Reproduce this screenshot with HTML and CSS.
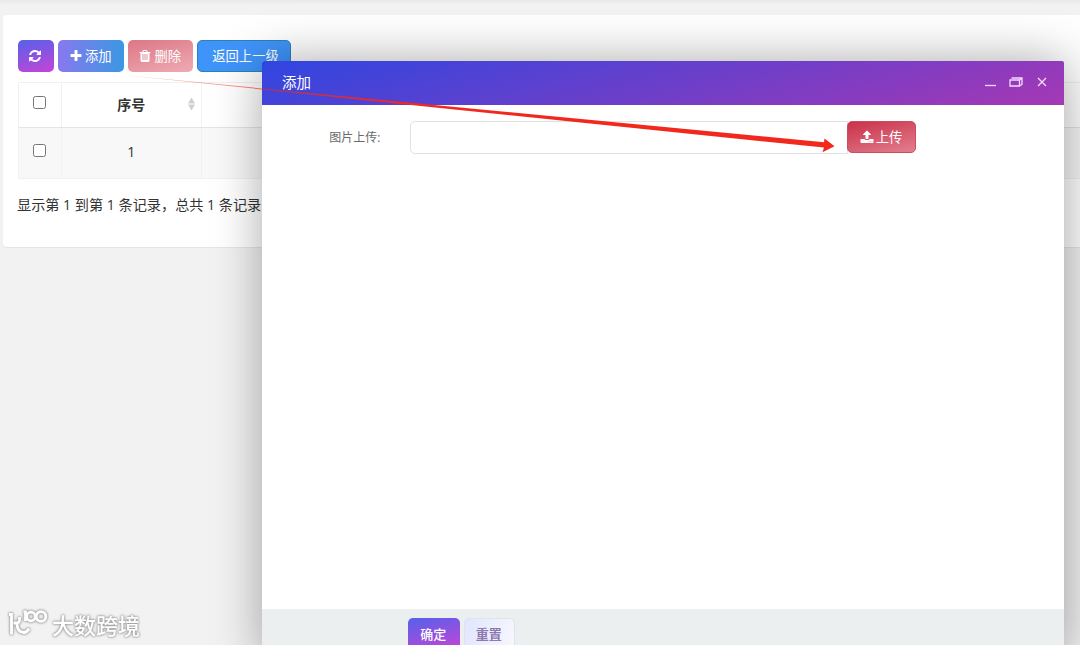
FILE: index.html
```html
<!DOCTYPE html>
<html lang="zh-CN">
<head>
    <meta charset="UTF-8">
    <title>添加</title>
    <link rel="stylesheet" href="styles.css">
</head>
<body>
<div class="card">
    <div class="toolbar">
        <button class="btn btn--refresh">
            <svg class="icon" viewBox="0 0 1792 1792"><path d="M1639 1056q0 5-1 7-64 268-268 434.5t-478 166.5q-146 0-282.5-55t-243.5-157l-129 129q-19 19-45 19t-45-19-19-45v-448q0-26 19-45t45-19h448q26 0 45 19t19 45-19 45l-137 137q71 66 161 102t187 36q134 0 250-65t186-179q11-17 53-117 8-23 30-23h192q13 0 22.5 9.5t9.5 22.5zm25-800v448q0 26-19 45t-45 19h-448q-26 0-45-19t-19-45 19-45l138-138q-148-137-349-137-134 0-250 65t-186 179q-11 17-53 117-8 23-30 23h-199q-13 0-22.5-9.5t-9.5-22.5v-7q65-268 270-434.5t480-166.5q146 0 284 55.5t245 156.5l130-129q19-19 45-19t45 19 19 45z"/></svg>
        </button>
        <button class="btn btn--add">
            <svg class="icon" viewBox="0 0 1792 1792"><path d="M1600 736v192q0 40-28 68t-68 28h-416v416q0 40-28 68t-68 28h-192q-40 0-68-28t-28-68v-416h-416q-40 0-68-28t-28-68v-192q0-40 28-68t68-28h416v-416q0-40 28-68t68-28h192q40 0 68 28t28 68v416h416q40 0 68 28t28 68z"/></svg>
            <span>添加</span>
        </button>
        <button class="btn btn--delete">
            <svg class="icon" viewBox="0 0 1792 1792"><path d="M704 1376v-704q0-14-9-23t-23-9h-64q-14 0-23 9t-9 23v704q0 14 9 23t23 9h64q14 0 23-9t9-23zm256 0v-704q0-14-9-23t-23-9h-64q-14 0-23 9t-9 23v704q0 14 9 23t23 9h64q14 0 23-9t9-23zm256 0v-704q0-14-9-23t-23-9h-64q-14 0-23 9t-9 23v704q0 14 9 23t23 9h64q14 0 23-9t9-23zm-544-992h448l-48-117q-7-9-17-11h-317q-10 2-17 11zm928 32v64q0 14-9 23t-23 9h-96v948q0 83-47 143.5t-113 60.5h-832q-66 0-113-58.5t-47-141.5v-952h-96q-14 0-23-9t-9-23v-64q0-14 9-23t23-9h309l70-167q15-37 54-63t79-26h320q40 0 79 26t54 63l70 167h309q14 0 23 9t9 23z"/></svg>
            <span>删除</span>
        </button>
        <button class="btn btn--back">返回上一级</button>
    </div>
    <div class="table">
        <div class="table__row table__row--head">
            <div class="table__cell"><input class="checkbox" type="checkbox"></div>
            <div class="table__cell">
                序号
                <svg class="table__sort" viewBox="0 0 8 15"><path d="M4 0l4 7H0zM4 15l4-7H0z"/></svg>
            </div>
            <div class="table__cell"></div>
        </div>
        <div class="table__row table__row--body">
            <div class="table__cell"><input class="checkbox" type="checkbox"></div>
            <div class="table__cell">1</div>
            <div class="table__cell"></div>
        </div>
    </div>
    <div class="summary">显示第 1 到第 1 条记录，总共 1 条记录</div>
</div>

<div class="layer">
    <div class="layer__title">
        <span>添加</span>
        <div class="layer__controls">
            <svg viewBox="0 0 12 12"><path d="M1 9.5h11"/></svg>
            <svg class="layer__max" viewBox="0 0 14 12"><path d="M1 4h9.5v6H1zM2.5 2h10.5v6.5l-2.5 1.5M10.5 4l2.5-2"/></svg>
            <svg viewBox="0 0 12 12"><path d="M2 2l8 8M10 2l-8 8"/></svg>
        </div>
    </div>
    <div class="layer__content">
        <label class="field__label" for="picture">图片上传:</label>
        <input class="field__input" id="picture" type="text">
        <button class="btn btn--upload">
            <svg class="icon" viewBox="0 0 1792 1792"><path d="M1344 1472q0-26-19-45t-45-19-45 19-19 45 19 45 45 19 45-19 19-45zm256 0q0-26-19-45t-45-19-45 19-19 45 19 45 45 19 45-19 19-45zm128-224v320q0 40-28 68t-68 28h-1472q-40 0-68-28t-28-68v-320q0-40 28-68t68-28h427q21 56 70.5 92t110.5 36h256q61 0 110.5-36t70.5-92h427q40 0 68 28t28 68zm-325-648q-17 40-59 40h-256v448q0 26-19 45t-45 19h-256q-26 0-45-19t-19-45v-448h-256q-42 0-59-40-17-39 14-69l448-448q18-19 45-19t45 19l448 448q31 30 14 69z"/></svg>
            <span>上传</span>
        </button>
    </div>
    <div class="layer__footer">
        <button class="btn btn--ok">确定</button>
        <button class="btn btn--reset">重置</button>
    </div>
</div>

<svg class="arrow" viewBox="0 0 1080 645">
    <defs>
        <linearGradient id="fade" gradientUnits="userSpaceOnUse" x1="118" y1="0" x2="400" y2="0">
            <stop offset="0" stop-color="#f2281c" stop-opacity=".3"/>
            <stop offset="1" stop-color="#f2281c"/>
        </linearGradient>
    </defs>
    <path fill="url(#fade)" d="M118 74.6L824 142.3L824.5 138.5L834.5 146.3L822.5 152.2L824 147.6Z"/>
</svg>

<div class="watermark">
    <svg class="watermark__logo" viewBox="0 0 40 30">
        <path d="M1 5.5h2.5v20M11.5 8v3q0 3-3 3h-3M9 14.5q0 9 7 9 3 0 5-4M15.5 3h2v9"/>
        <circle cx="23" cy="7.5" r="4.3"/>
        <circle cx="33" cy="7.5" r="4.8"/>
    </svg>
    <span>大数跨境</span>
</div>
</body>
</html>
```
FILE: styles.css
```css
html,
body {
    margin: 0;
    padding: 0;
    width: 100%;
    height: 100%;
    overflow: hidden;
}

* {
    box-sizing: border-box;
}

body {
    padding: 15px 0 0 2.5px;
    background: linear-gradient(#e7e9e9, #f2f2f2 5px);
    color: #333;
    font: 14px "Open Sans", "Noto Sans CJK SC", sans-serif;
}

.card {
    width: 1100px;
    height: 232px;
    padding: 25px 15px 0;
    border-radius: 4px;
    background: #fff;
    box-shadow: 0 1px 1px rgba(0, 0, 0, .06);
}

.toolbar {
    display: flex;
    gap: 4px;
}

.btn {
    display: flex;
    flex: none;
    justify-content: center;
    align-items: center;
    gap: 2px;
    height: 32px;
    padding: 0 1px 2px 0;
    border: 1px solid transparent;
    border-radius: 5px;
    color: #fff;
    font: 13.3px "Noto Sans CJK SC", sans-serif;
    white-space: nowrap;
}

.icon {
    width: 14px;
    height: 14px;
    margin-top: 1px;
    fill: currentColor;
}

.btn--refresh {
    width: 36.5px;
    border: 0;
    background: linear-gradient(165deg, #5561ea, #c644d7);
}

.btn--add {
    width: 65.5px;
    border: 0;
    background: linear-gradient(to right, #8878ee, #3b98e3);
}

.btn--delete {
    width: 65.5px;
    border: 0;
    background: linear-gradient(165deg, #dc7785, #eeabb4);
}

.btn--back {
    width: 94px;
    padding-left: 4px;
    border-color: #2d82b5;
    background: #3f94fa;
}

.table {
    margin-top: 10px;
    border: 1px solid #f1f1f1;
    border-right: 0;
}

.table__row {
    display: grid;
    grid-template-columns: 43px 140.5px 1fr;
}

.table__row--head {
    height: 45px;
    border-bottom: 1px solid #e4e4e4;
    font-weight: 700;
}

.table__row--body {
    height: 50px;
    background: #f8f8f8;
}

.table__cell {
    position: relative;
    display: flex;
    justify-content: center;
    align-items: center;
    padding-bottom: 3px;
    border-right: 1px solid #f1f1f1;
}

.table__sort {
    position: absolute;
    right: 6px;
    width: 7px;
    height: 14px;
    fill: #cfcfcf;
}

.checkbox {
    width: 13px;
    height: 13px;
    margin: 0 0 3px;
}

.summary {
    margin-top: 14px;
    margin-left: -0.5px;
    font-size: 14.15px;
    line-height: 24px;
    white-space: nowrap;
}

.layer {
    position: absolute;
    top: 60.5px;
    left: 262px;
    display: flex;
    flex-direction: column;
    width: 802px;
    height: 600px;
    border-radius: 2px;
    background: #fff;
    box-shadow: 1px 1px 50px rgba(0, 0, 0, .36);
}

.layer__title {
    display: flex;
    justify-content: space-between;
    align-items: center;
    height: 44.5px;
    padding: 0 16px 2px 20px;
    border-radius: 2px 2px 0 0;
    background: linear-gradient(165deg, #2f46e0, #a538b4);
    color: #fff;
    font-size: 14.5px;
}

.layer__controls {
    display: flex;
    align-items: center;
    gap: 13px;
}

.layer__controls svg {
    width: 12px;
    height: 12px;
    fill: none;
    stroke: #f3dcfa;
    stroke-width: 1.3;
}

.layer__controls .layer__max {
    width: 14px;
}

.layer__content {
    display: flex;
    flex: 1;
    align-items: flex-start;
    padding-top: 16px;
}

.field__label {
    width: 148px;
    padding-right: 29.5px;
    color: #676a6c;
    font-size: 12px;
    line-height: 33px;
    text-align: right;
}

.field__input {
    width: 438px;
    height: 33px;
    border: 1px solid #e0e3e6;
    border-radius: 5px 0 0 5px;
    background: #fff;
}

.btn--upload {
    width: 69px;
    margin-left: -1px;
    border-color: #c94c60;
    background: linear-gradient(165deg, #ca3049, #e27f8e);
}

.layer__footer {
    display: flex;
    gap: 4px;
    height: 51.5px;
    padding: 9px 0 0 146px;
    background: #ebeff0;
}

.btn--ok,
.btn--reset {
    width: 51.5px;
    font-size: 13px;
    font-weight: 500;
}

.btn--ok {
    border: 0;
    background: linear-gradient(165deg, #5561ea, #c644d7);
}

.btn--reset {
    border-color: #e0e2ee;
    background: linear-gradient(110deg, #e0e6ff, #f8f7fc);
    color: #8d78b0;
    font-weight: 700;
}

.arrow {
    position: absolute;
    top: 0;
    left: 0;
    width: 1080px;
    height: 645px;
    pointer-events: none;
}

.watermark {
    position: absolute;
    left: 8px;
    bottom: 5px;
    display: flex;
    align-items: center;
    gap: 4px;
    color: #fff;
    font: 500 22px/32px "Noto Sans CJK SC", sans-serif;
    filter: drop-shadow(0 0 1px #999) drop-shadow(0 0 1px #aaa);
}

.watermark__logo {
    width: 40px;
    height: 30px;
    fill: none;
    stroke: #fff;
    stroke-width: 2.8;
}
```
